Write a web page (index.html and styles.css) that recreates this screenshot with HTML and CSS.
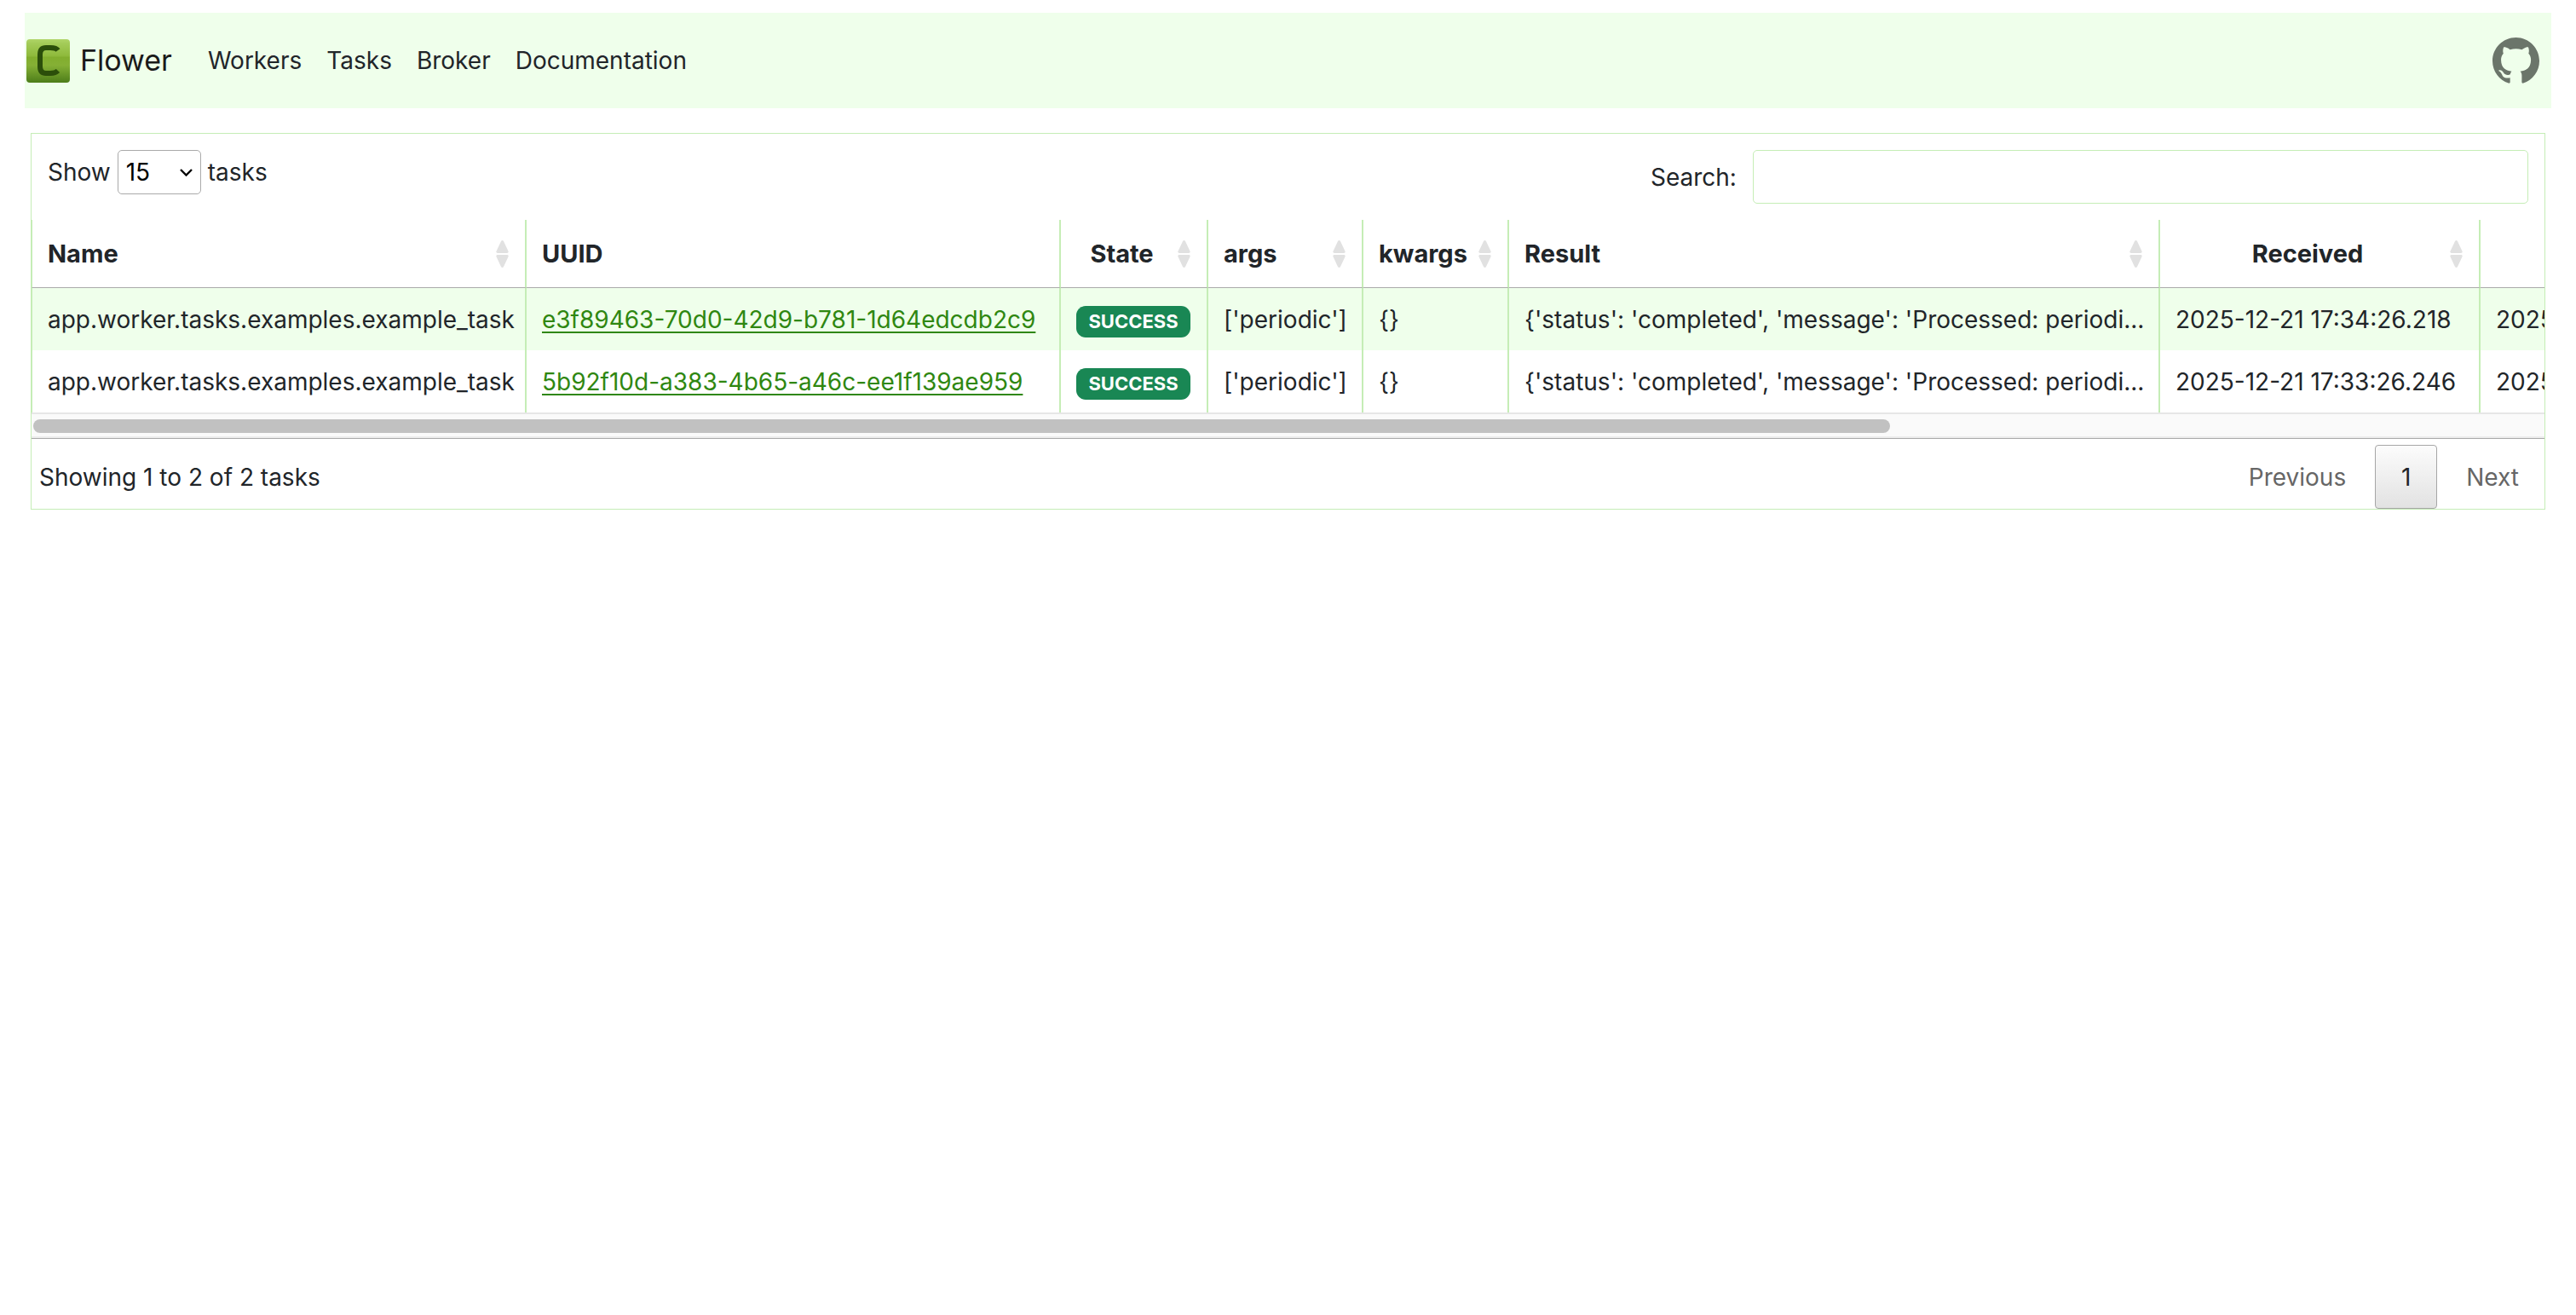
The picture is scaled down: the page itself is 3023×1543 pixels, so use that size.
FILE: index.html
```html
<!DOCTYPE html>
<html lang="en">
<head>
	<meta charset="utf-8">
	<title>Flower</title>
	<link rel="stylesheet" href="styles.css">
</head>
<body>
	<nav class="navbar">
		<a class="brand" href="#">
			<svg class="logo" viewBox="0 0 51 51" aria-hidden="true">
				<defs>
					<linearGradient id="leaf" x1="0" y1="0" x2="0" y2="1">
						<stop offset="0" stop-color="#b0d568"/>
						<stop offset="0.1" stop-color="#a3cb58"/>
						<stop offset="0.38" stop-color="#8fba3c"/>
						<stop offset="0.42" stop-color="#82ae2e"/>
						<stop offset="0.6" stop-color="#85b035"/>
						<stop offset="1" stop-color="#4d7d1a"/>
					</linearGradient>
				</defs>
				<rect x="0" y="0" width="51" height="51" rx="4" fill="url(#leaf)"/>
				<path d="M37 13 Q35 10 28 10 H23 Q16 10 16 18 V32 Q16 40 23 40 H28 Q34 40 37 37" fill="none" stroke="#2b4e0a" stroke-width="6"/>
			</svg>
			<span>Flower</span>
		</a>
		<ul class="nav-links">
			<li><a href="#">Workers</a></li>
			<li><a href="#">Tasks</a></li>
			<li><a href="#">Broker</a></li>
			<li><a href="#">Documentation</a></li>
		</ul>
		<a class="github" href="#" aria-label="GitHub">
			<svg viewBox="0 0 16 16" aria-hidden="true"><path fill="currentColor" d="M8 0C3.58 0 0 3.58 0 8c0 3.54 2.29 6.53 5.47 7.59.4.07.55-.17.55-.38 0-.19-.01-.82-.01-1.49-2.01.37-2.53-.49-2.69-.94-.09-.23-.48-.94-.82-1.13-.28-.15-.68-.52-.01-.53.63-.01 1.08.58 1.23.82.72 1.21 1.87.87 2.33.66.07-.52.28-.87.51-1.07-1.78-.2-3.64-.89-3.64-3.95 0-.87.31-1.59.82-2.15-.08-.2-.36-1.02.08-2.12 0 0 .67-.21 2.2.82.64-.18 1.32-.27 2-.27s1.36.09 2 .27c1.53-1.04 2.2-.82 2.2-.82.44 1.1.16 1.92.08 2.12.51.56.82 1.27.82 2.15 0 3.07-1.87 3.75-3.65 3.95.29.25.54.73.54 1.48 0 1.07-.01 1.93-.01 2.2 0 .21.15.46.55.38A8.01 8.01 0 0 0 16 8c0-4.42-3.58-8-8-8z"/></svg>
		</a>
	</nav>

	<svg class="sprite" aria-hidden="true">
		<symbol id="sort" viewBox="0 0 15 32">
			<path d="M6 1 Q7.5 -1 9 1 L14.6 13 Q15 15 13 15 H2 Q0 15 0.4 13 Z"/>
			<path d="M6 31 Q7.5 33 9 31 L14.6 19 Q15 17 13 17 H2 Q0 17 0.4 19 Z"/>
		</symbol>
	</svg>

	<main class="panel">
		<div class="toolbar">
			<div class="length">
				<label for="length">Show</label>
				<span class="select-box">
					<select id="length" name="length">
						<option>15</option>
						<option>30</option>
						<option>50</option>
						<option>100</option>
					</select>
					<svg viewBox="0 0 15 9" aria-hidden="true"><path d="M1 1 L7.5 7.5 L14 1" fill="none" stroke="#000" stroke-width="2.4"/></svg>
				</span>
				<span>tasks</span>
			</div>
			<div class="search">
				<label for="search">Search:</label>
				<input type="search" id="search" name="search">
			</div>
		</div>

		<div class="table-scroll">
			<table>
				<colgroup>
					<col class="col-name">
					<col class="col-uuid">
					<col class="col-state">
					<col class="col-args">
					<col class="col-kwargs">
					<col class="col-result">
					<col class="col-time">
					<col class="col-time">
				</colgroup>
				<thead>
					<tr>
						<th><div class="head"><span>Name</span><svg><use href="#sort"/></svg></div></th>
						<th><div class="head"><span>UUID</span></div></th>
						<th class="center"><div class="head"><span>State</span><svg><use href="#sort"/></svg></div></th>
						<th><div class="head"><span>args</span><svg><use href="#sort"/></svg></div></th>
						<th><div class="head"><span>kwargs</span><svg><use href="#sort"/></svg></div></th>
						<th><div class="head"><span>Result</span><svg><use href="#sort"/></svg></div></th>
						<th class="center"><div class="head"><span>Received</span><svg><use href="#sort"/></svg></div></th>
						<th class="center"><div class="head"><span>Started</span><svg><use href="#sort"/></svg></div></th>
					</tr>
				</thead>
				<tbody>
					<tr>
						<td>app.worker.tasks.examples.example_task</td>
						<td><a href="#">e3f89463-70d0-42d9-b781-1d64edcdb2c9</a></td>
						<td class="center"><span class="badge">SUCCESS</span></td>
						<td>['periodic']</td>
						<td>{}</td>
						<td>{'status': 'completed', 'message': 'Processed: periodi...</td>
						<td>2025-12-21 17:34:26.218</td>
						<td>2025-12-21 17:34:26.219</td>
					</tr>
					<tr>
						<td>app.worker.tasks.examples.example_task</td>
						<td><a href="#">5b92f10d-a383-4b65-a46c-ee1f139ae959</a></td>
						<td class="center"><span class="badge">SUCCESS</span></td>
						<td>['periodic']</td>
						<td>{}</td>
						<td>{'status': 'completed', 'message': 'Processed: periodi...</td>
						<td>2025-12-21 17:33:26.246</td>
						<td>2025-12-21 17:33:26.247</td>
					</tr>
				</tbody>
			</table>
		</div>
		<div class="scrollbar"><div class="thumb"></div></div>

		<div class="footer">
			<div class="info">Showing 1 to 2 of 2 tasks</div>
			<div class="pages">
				<button type="button" disabled>Previous</button>
				<button type="button" class="current">1</button>
				<button type="button" disabled>Next</button>
			</div>
		</div>
	</main>
</body>
</html>
```

FILE: styles.css
```css
* {
	box-sizing: border-box;
}

body {
	margin: 15px 29px 0;
	background-color: #fff;
	font-family: Inter, "Liberation Sans", sans-serif;
	font-size: 28px;
	line-height: 44px;
	color: #212529;
}

/* navbar */
.navbar {
	display: flex;
	align-items: center;
	height: 112px;
	padding: 0 14px 0 2px;
	background-color: #efffeb;
}

.brand {
	display: flex;
	align-items: center;
	gap: 12px;
	font-size: 34px;
	color: #1a1a1a;
	text-decoration: none;
}

.logo {
	width: 51px;
	height: 51px;
}

.nav-links {
	display: flex;
	gap: 29px;
	flex: 1;
	margin: 0 0 0 42px;
	padding: 0;
	list-style: none;
}

.nav-links a {
	color: #212529;
	text-decoration: none;
}

.github {
	color: #6b756a;
}

.github svg {
	display: block;
	width: 55px;
	height: 55px;
}

.sprite {
	display: none;
}

/* task list */
.panel {
	margin: 29px 7px 0;
	border: 1px solid #c5edb6;
}

.toolbar {
	display: flex;
	justify-content: space-between;
	align-items: flex-start;
	padding: 19px;
}

.length {
	display: flex;
	align-items: center;
	gap: 8px;
	height: 52px;
}

.select-box {
	display: grid;
	align-items: center;
}

.select-box select,
.select-box svg {
	grid-area: 1 / 1;
}

.select-box select {
	width: 98px;
	height: 52px;
	padding: 0 9px;
	border: 1px solid #aaa;
	border-radius: 5px;
	background-color: #fff;
	font: inherit;
	color: #000;
	appearance: none;
}

.select-box svg {
	justify-self: end;
	width: 15px;
	height: 9px;
	margin-right: 10px;
	pointer-events: none;
}

.search {
	display: flex;
	align-items: center;
	justify-content: flex-end;
	gap: 19px;
	flex: 1;
}

.search input {
	width: 34.3%;
	height: 63px;
	padding: 9px;
	border: 1px solid #c5edb6;
	border-radius: 5px;
	background-color: #fff;
	font: inherit;
}

.table-scroll {
	overflow: hidden;
}

table {
	width: 3250px;
	table-layout: fixed;
	border-collapse: separate;
	border-spacing: 0;
}

.col-name { width: 581px; }
.col-uuid { width: 627px; }
.col-state { width: 173px; }
.col-args { width: 182px; }
.col-kwargs { width: 171px; }
.col-result { width: 764px; }
.col-time { width: 376px; }

th,
td {
	padding: 0 19px 0 18px;
	border-right: 2px solid #c5edb6;
	text-align: left;
	white-space: nowrap;
}

th:first-child,
td:first-child {
	border-left: 1px solid #c5edb6;
}

th {
	height: 80px;
	border-bottom: 1px solid #aaa;
	font-size: 29px;
	font-weight: 700;
}

td {
	height: 73px;
}

tbody tr:nth-child(odd) {
	background-color: #efffeb;
}

.center {
	text-align: center;
}

td a {
	color: #2f8711;
	text-decoration-thickness: 2px;
	text-underline-offset: 4px;
}

.head {
	display: flex;
	align-items: center;
	gap: 12px;
}

.head span {
	flex: 1;
}

.head svg {
	width: 15px;
	height: 32px;
	fill: #e1e1e1;
}

.badge {
	display: inline-block;
	padding: 0 14px;
	border-radius: 11px;
	background-color: #198754;
	font-size: 22px;
	font-weight: 700;
	line-height: 37px;
	color: #fff;
}

.scrollbar {
	height: 31px;
	padding: 6px 2px;
	border-top: 2px solid #e6e6e6;
	border-bottom: 1px solid #aaa;
	background-color: #fafafa;
	box-shadow: inset 0 -2px #ededed;
}

.thumb {
	width: 74%;
	height: 16px;
	border-radius: 8px;
	background-color: #c1c1c1;
}

.footer {
	display: flex;
	justify-content: space-between;
	align-items: center;
	padding: 7px 0 0 9px;
}

.pages {
	display: flex;
	gap: 4px;
}

.pages button {
	min-width: 73px;
	height: 75px;
	padding: 0 29px;
	border: 1px solid transparent;
	border-radius: 4px;
	background: none;
	font: inherit;
	color: #666;
}

.pages .current {
	border-color: #a6a6a6;
	background: linear-gradient(#fcfcfc, #e2e2e2);
	color: #212529;
}
```
